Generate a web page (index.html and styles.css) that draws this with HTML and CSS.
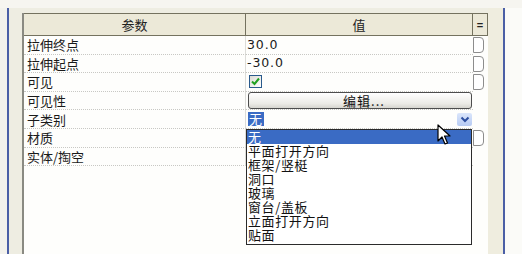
FILE: index.html
```html
<!DOCTYPE html>
<html>
<head>
<meta charset="utf-8">
<link rel="stylesheet" href="styles.css">
</head>
<body>
<div class="screen">
  <div class="edge"></div>
  <div class="rule"></div>
  <div class="gutter-l"></div>
  <div class="panel-wrap">
    <div class="panel">
      <div class="hcell h1">参数</div>
      <div class="hcell h2">值</div>
      <div class="hcell h3">=</div>

      <div class="name">拉伸终点</div>
      <div class="val">30.0</div>
      <div class="side"><span class="assoc"></span></div>

      <div class="name">拉伸起点</div>
      <div class="val">-30.0</div>
      <div class="side"><span class="assoc"></span></div>

      <div class="name">可见</div>
      <div class="val"><span class="check"><svg width="11" height="11" viewBox="0 0 11 11"><path d="M2 5.5 L4.5 8 L9 2.5" fill="none" stroke="#21a121" stroke-width="2"/></svg></span></div>
      <div class="side"><span class="assoc"></span></div>

      <div class="name">可见性</div>
      <div class="val"><span class="btn">编辑...</span></div>
      <div class="side"></div>

      <div class="name">子类别</div>
      <div class="val combo"><span class="sel">无</span><span class="arrow"><svg width="10" height="7" viewBox="0 0 10 7"><path d="M1.5 1.5 L5 5 L8.5 1.5" fill="none" stroke="#2d4fa0" stroke-width="2"/></svg></span></div>
      <div class="side"></div>

      <div class="name">材质</div>
      <div class="val"></div>
      <div class="side"><span class="assoc"></span></div>

      <div class="name">实体/掏空</div>
      <div class="val"></div>
      <div class="side"></div>

      <div class="filler"></div>
    </div>
  </div>
  <div class="gutter-r"></div>
  <div class="rule"></div>
  <div class="edge-r"></div>
</div>

<div class="dropdown">
  <div class="item active">无</div>
  <div class="item">平面打开方向</div>
  <div class="item">框架/竖梃</div>
  <div class="item">洞口</div>
  <div class="item">玻璃</div>
  <div class="item">窗台/盖板</div>
  <div class="item">立面打开方向</div>
  <div class="item">贴面</div>
</div>

<svg class="cursor" width="14" height="22" viewBox="0 0 14 22">
  <path d="M1 1 L1 17 L5 13 L8 20 L10.5 19 L7.5 12 L13 12 Z" fill="#fff" stroke="#000" stroke-width="1.2" stroke-linejoin="round"/>
</svg>
</body>
</html>
```

FILE: styles.css
```css
html, body {
  margin: 0;
  padding: 0;
}
body {
  width: 522px;
  height: 254px;
  overflow: hidden;
  background: #f6f5f0;
  font-family: "Noto Sans CJK SC", "Liberation Sans", sans-serif;
  font-size: 13px;
  color: #1a1a1a;
  position: relative;
}
.screen {
  display: flex;
  height: 246px;
  margin-top: 8px;
}
.edge {
  width: 7px;
  background: #f3f2ec;
}
.rule {
  width: 2px;
  background: #4b5fa6;
}
.gutter-l {
  width: 13px;
  background: #eeede2;
}
.gutter-r {
  width: 15px;
  background: #efeddf;
}
.edge-r {
  flex: 1;
  background: #fbfbf8;
}
.panel-wrap {
  width: 466px;
  display: flex;
  flex-direction: column;
  padding-top: 5px;
  background: #eeede2;
}
.panel {
  flex: 1;
  display: grid;
  grid-template-columns: 222px 227px 15px;
  grid-template-rows: 23px repeat(7, 18.6px) 1fr;
  border-left: 2px solid #8a8a82;
  background: #fefefc;
}
.hcell {
  background: #ece9d8;
  border-top: 1px solid #74725f;
  border-bottom: 1px solid #74725f;
  display: flex;
  align-items: center;
  justify-content: center;
  font-size: 13px;
  color: #222;
}
.h1 {
  border-right: 1px solid #74725f;
}
.h2 {
  border-right: 1px solid #74725f;
}
.h3 {
  border-right: 1px solid #74725f;
  font-family: "Liberation Sans", sans-serif;
  font-size: 11px;
  font-weight: bold;
}
.name {
  padding-left: 3px;
  border-bottom: 1px dotted #c8c8c4;
  border-right: 1px solid #dcdcd8;
  display: flex;
  align-items: center;
  line-height: 1;
}
.val {
  padding-left: 1px;
  border-bottom: 1px dotted #c8c8c4;
  display: flex;
  align-items: center;
  font-family: "DejaVu Sans", "Noto Sans CJK SC", sans-serif;
  font-size: 12.5px;
  letter-spacing: 0.9px;
  line-height: 1;
}
.side {
  display: flex;
  align-items: center;
}
.assoc {
  width: 9px;
  height: 14px;
  border: 1px solid #8d8d8d;
  border-radius: 0 4px 4px 0;
  background: #fff;
}
.check {
  width: 13px;
  height: 13px;
  margin-left: 2px;
  border: 1px solid #2a5a8c;
  background: linear-gradient(135deg, #dcdcd4, #fff);
  display: flex;
  align-items: center;
  justify-content: center;
  box-sizing: border-box;
}
.btn {
  flex: 1;
  height: 15px;
  margin: 0 1px 0 1px;
  border: 1px solid #4d4d4d;
  border-radius: 3px;
  background: linear-gradient(#ffffff, #ecebe6 70%, #d6d5cf);
  display: flex;
  align-items: center;
  justify-content: center;
  font-family: "Noto Sans CJK SC", sans-serif;
  font-size: 13px;
  letter-spacing: 1px;
  color: #111;
  padding-left: 8px;
}
.combo {
  justify-content: space-between;
}
.sel {
  background: #3a6bc4;
  color: #fff;
  font-family: "Noto Sans CJK SC", sans-serif;
  font-size: 13px;
  line-height: 14px;
  padding: 0 1px;
  margin-left: 1px;
}
.arrow {
  width: 15px;
  height: 13px;
  margin-right: 1px;
  background: linear-gradient(#dbe6fb, #b7cbf3);
  border-radius: 2px;
  display: flex;
  align-items: center;
  justify-content: center;
}
.filler {
  grid-column: 1 / 4;
}
.dropdown {
  position: absolute;
  left: 246px;
  top: 129px;
  width: 224px;
  height: 114px;
  border: 1px solid #2b2b2b;
  background: #fff;
  font-family: "Noto Sans CJK SC", sans-serif;
  font-size: 13px;
  letter-spacing: 0.6px;
  line-height: 14px;
  color: #111;
}
.item {
  height: 14px;
  padding-left: 1px;
  white-space: nowrap;
}
.item.active {
  background: #3a6bc4;
  color: #fff;
}
.cursor {
  position: absolute;
  left: 437px;
  top: 124px;
}
```
